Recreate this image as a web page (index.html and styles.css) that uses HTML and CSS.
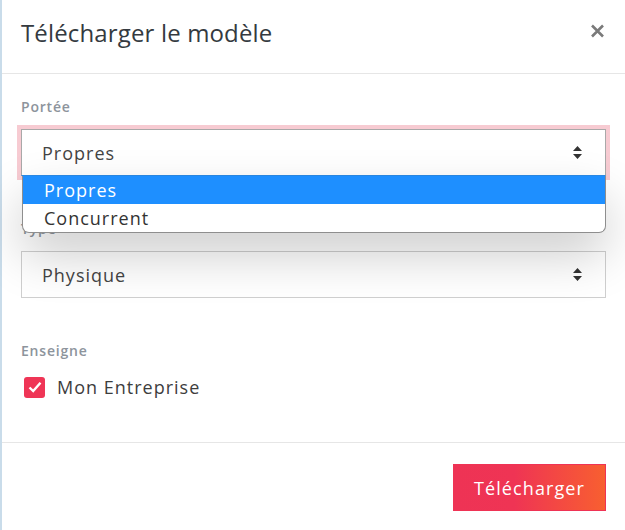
FILE: index.html
```html
<!DOCTYPE html>
<html lang="fr">
<head>
<meta charset="utf-8">
<title>Télécharger le modèle</title>
<link rel="stylesheet" href="styles.css">
</head>
<body>
<div class="modal">
  <div class="header">
    <h1 class="title">Télécharger le modèle</h1>
    <span class="close">
      <svg width="15" height="14" viewBox="0 0 15 14"><path d="M2 1.5 L13 12.5 M13 1.5 L2 12.5" stroke="#7a7a7a" stroke-width="2.6" stroke-linecap="butt"/></svg>
    </span>
  </div>
  <div class="body">
    <div class="field">
      <div class="label">Portée</div>
      <div class="select-wrap">
        <div class="select focused">
          <span>Propres</span>
          <svg class="arrows" width="9" height="13" viewBox="0 0 9 13"><path d="M4.5 0 L9 5 H0 Z M0 8 H9 L4.5 13 Z" fill="#333"/></svg>
        </div>
        <ul class="dropdown">
          <li class="opt active">Propres</li>
          <li class="opt">Concurrent</li>
        </ul>
      </div>
    </div>
    <div class="field">
      <div class="label">Type</div>
      <div class="select-wrap">
        <div class="select">
          <span>Physique</span>
          <svg class="arrows" width="9" height="13" viewBox="0 0 9 13"><path d="M4.5 0 L9 5 H0 Z M0 8 H9 L4.5 13 Z" fill="#333"/></svg>
        </div>
      </div>
    </div>
    <div class="field last">
      <div class="label">Enseigne</div>
      <label class="check-row">
        <span class="checkbox">
          <svg width="14" height="12" viewBox="0 0 14 12"><path d="M1.5 6.5 L5.2 10 L12.5 1.8" fill="none" stroke="#fff" stroke-width="2.4"/></svg>
        </span>
        <span class="check-text">Mon Entreprise</span>
      </label>
    </div>
  </div>
  <div class="footer">
    <button class="btn">Télécharger</button>
  </div>
</div>
</body>
</html>
```
FILE: styles.css
```css
html, body {
  margin: 0;
  padding: 0;
  background: #fff;
}
body {
  font-family: "Open Sans", "Liberation Sans", sans-serif;
  color: #444;
}
.modal {
  width: 623px;
  height: 530px;
  border-left: 2px solid #c9dcea;
  background: #fff;
}
.header {
  height: 74px;
  box-sizing: border-box;
  display: flex;
  align-items: flex-start;
  justify-content: space-between;
  padding: 17px 19px 0 19px;
  border-bottom: 1px solid #e6e6e6;
}
.title {
  margin: 0;
  font-size: 24px;
  line-height: 32px;
  font-weight: 500;
  color: #343a40;
  letter-spacing: 0.15px;
}
.close {
  display: flex;
  margin-top: 7px;
  margin-right: 1px;
}
.body {
  padding: 23px 19px 41px;
}
.field {
  margin-bottom: 43px;
}
.field.last {
  margin-bottom: 0;
}
.label {
  font-size: 14px;
  line-height: 20px;
  font-weight: 600;
  color: #8d949c;
  margin-bottom: 12px;
  letter-spacing: 0.8px;
}
.select-wrap {
  position: relative;
}
.select {
  height: 47px;
  box-sizing: border-box;
  border: 1px solid #cfcfcf;
  display: flex;
  align-items: center;
  justify-content: space-between;
  padding: 0 23px 0 20px;
  font-size: 18px;
  letter-spacing: 1px;
  color: #444;
  background: #fff;
}
.select.focused {
  border-color: #a9a9a9;
  border-bottom-color: #2b8be8;
  box-shadow: 0 0 0 4px #f7cbd2;
}
.arrows {
  display: block;
}
.dropdown {
  position: absolute;
  top: 47px;
  left: 1px;
  right: 0;
  margin: 0;
  padding: 0;
  list-style: none;
  background: #fff;
  border: 1px solid #8e8e8e;
  border-top: none;
  border-radius: 0 0 7px 7px;
  overflow: hidden;
  box-shadow: 0 22px 50px rgba(0, 0, 0, 0.2);
  z-index: 5;
}
.opt {
  height: 28px;
  line-height: 28px;
  padding-left: 21px;
  font-size: 18px;
  letter-spacing: 1px;
  color: #333;
}
.opt.active {
  background: #1e8fff;
  color: #fff;
}
.check-row {
  display: flex;
  align-items: center;
  height: 28px;
  padding-left: 3px;
}
.checkbox {
  width: 21px;
  height: 21px;
  border-radius: 3px;
  background: #ef3556;
  display: flex;
  align-items: center;
  justify-content: center;
}
.check-text {
  margin-left: 12px;
  font-size: 18px;
  letter-spacing: 1px;
  color: #3d3d3d;
}
.footer {
  border-top: 1px solid #e6e6e6;
  padding: 21px 19px 0;
  display: flex;
  justify-content: flex-end;
}
.btn {
  width: 153px;
  height: 47px;
  border: 1px solid #ef3355;
  background: linear-gradient(90deg, #ee3355 0%, #ef3454 40%, #f85f30 100%);
  color: #fff;
  font-family: "Open Sans", "Liberation Sans", sans-serif;
  font-size: 18px;
  letter-spacing: 1.1px;
  padding: 0;
}
```
